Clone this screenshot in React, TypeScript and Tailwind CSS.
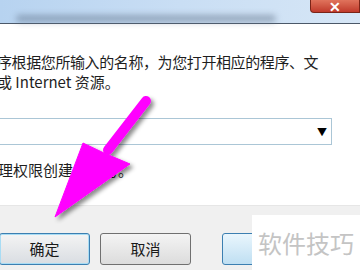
const font = { fontFamily: '"Noto Sans CJK SC", "Noto Sans", sans-serif' };

const Btn = ({ label, focused, hot }: { label: string; focused?: boolean; hot?: boolean }) => (
  <div
    className={`flex h-[32px] w-[91px] shrink-0 items-center justify-center rounded-[3px] border text-[15px] text-[#1a1a1a] ${
      focused
        ? 'border-[#3c7fb1] bg-gradient-to-b from-[#f4f4f4] to-[#d9dde2] shadow-[inset_0_0_0_1px_#a8dcf4]'
        : hot
        ? 'border-[#3c7fb1] bg-gradient-to-b from-[#eaf6fd] to-[#bfdff2]'
        : 'border-[#707070] bg-gradient-to-b from-[#f4f4f4] to-[#dcdcdc]'
    }`}
  >
    {label}
  </div>
);

export default function App() {
  return (
    <div className="relative h-[270px] w-[360px] overflow-hidden bg-white" style={font}>
      {/* title bar */}
      <div className="relative h-[24px] border-b border-[#4b5868] bg-gradient-to-r from-[#b7d3f0] via-[#c9def4] to-[#d6e6f6]">
        <div className="absolute left-[16px] top-[15px] h-[7px] w-[260px] rounded-full bg-[#5d6f85] opacity-50 blur-[3px]" />
        <div className="absolute right-0 top-0 flex h-[13px] w-[50px] items-end justify-center rounded-bl-[4px] border border-t-0 border-[#7a2417] bg-gradient-to-b from-[#e0735c] to-[#c0392b]">
          <span className="text-[14px] font-bold leading-[12px] text-white">✕</span>
        </div>
      </div>

      {/* content */}
      <div className="flex h-[181px] flex-col text-[15px] leading-[20px] text-[#1e1e1e]">
        <p className="-ml-[3px] mt-[28px] whitespace-nowrap tracking-[-0.4px]">序根据您所输入的名称，为您打开相应的程序、文</p>
        <p className="-ml-[3px] whitespace-nowrap">或 Internet 资源。</p>
        <div className="-ml-[4px] mt-[26px] flex h-[27px] w-[336px] items-center justify-end border border-[#abc6d6] pr-[4px]">
          <span className="text-[10px] leading-none text-black">▼</span>
        </div>
        <p className="-ml-[2px] mt-[15px] whitespace-nowrap">理权限创建此任务。</p>
      </div>

      {/* button bar */}
      <div className="-ml-[1px] flex h-[65px] items-start gap-[10px] border-t border-[#e6e6e6] bg-[#f0f0f0] pt-[27px]">
        <Btn label="确定" focused />
        <Btn label="取消" />
        <div className="ml-[21px]">
          <Btn label="浏览" hot />
        </div>
      </div>

      {/* watermark */}
      <div className="absolute left-[252px] top-[215px] flex h-[55px] w-[108px] items-center overflow-hidden whitespace-nowrap bg-white pl-[6px] text-[24px] text-[#c4c4c4]">
        软件技巧
      </div>

      {/* arrow overlay */}
      <svg className="absolute left-0 top-0" width="360" height="270" viewBox="0 0 360 270">
        <defs>
          <filter id="sh" x="-20%" y="-20%" width="140%" height="140%">
            <feDropShadow dx="3" dy="3" stdDeviation="2" floodColor="#000" floodOpacity="0.45" />
          </filter>
        </defs>
        <g filter="url(#sh)" fill="#ff00ff" stroke="#ff00ff">
          <line x1="146" y1="101" x2="108" y2="150" strokeWidth="10" strokeLinecap="round" />
          <polygon points="55,217 83,143 104,153 130,164" strokeWidth="1" strokeLinejoin="round" />
        </g>
      </svg>
    </div>
  );
}
